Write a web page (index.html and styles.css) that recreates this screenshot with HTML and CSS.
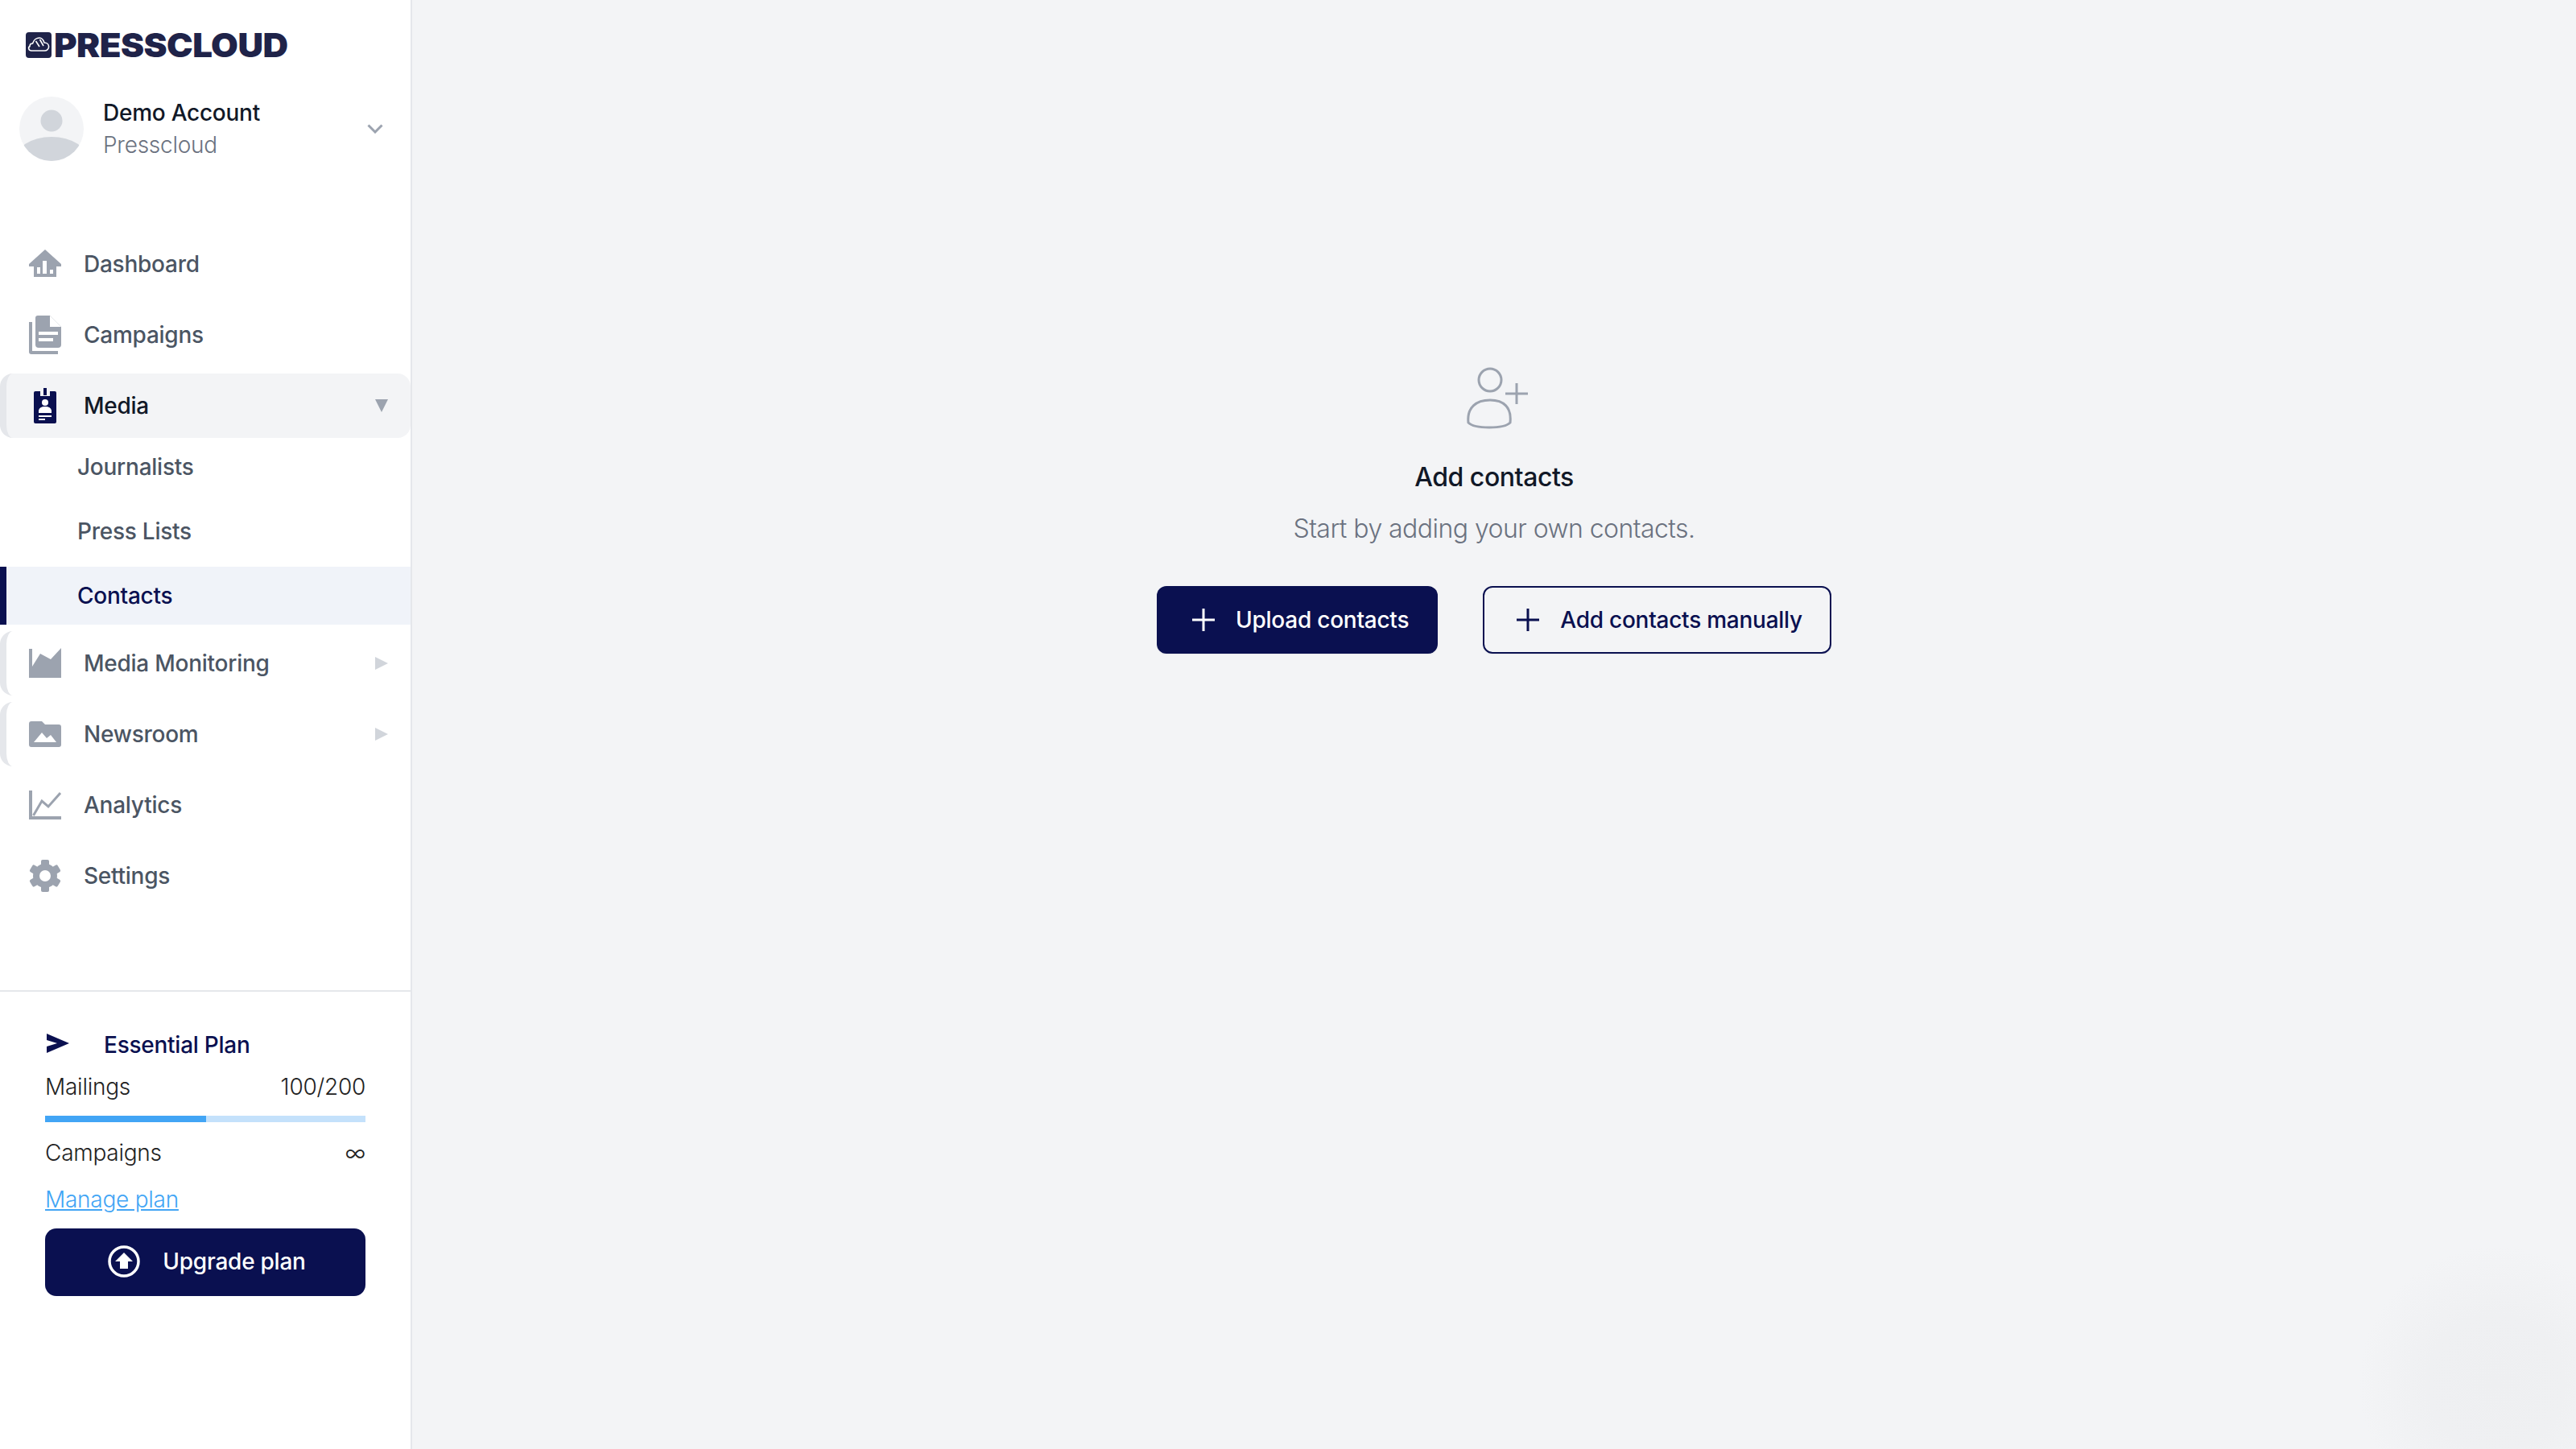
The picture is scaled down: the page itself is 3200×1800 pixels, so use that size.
FILE: index.html
```html
<!DOCTYPE html>
<html lang="en">
<head>
  <meta charset="UTF-8" />
  <meta name="viewport" content="width=device-width, initial-scale=1.0" />
  <title>Presscloud - Contacts</title>
  <link rel="stylesheet" href="styles.css">
</head>
<body>
  <aside class="sidebar">
    <div class="logo">
      <svg class="logo-mark" viewBox="0 0 32 32">
        <rect width="32" height="32" rx="4" fill="#1f2349"/>
        <path d="M7 23C3.5 23 2.6 19 5 17.5C5 15 7 14 8.5 14C10 9 14 7 17 7C20 7 22 10 23 13C26 13 28.6 15 28.6 18C28.6 21 26 23 23.5 23Z" fill="none" stroke="#fff" stroke-width="1.6"/>
        <path d="M12.5 11L17 18M17.5 9L22 17" fill="none" stroke="#fff" stroke-width="1.6"/>
      </svg>
      <span class="logo-text">PRESSCLOUD</span>
    </div>

    <div class="account">
      <svg class="avatar" viewBox="0 0 80 80">
        <clipPath id="avatar-clip"><circle cx="40" cy="40" r="40"/></clipPath>
        <circle cx="40" cy="40" r="40" fill="#f3f4f6"/>
        <circle cx="40" cy="30" r="13.5" fill="#d1d5db"/>
        <ellipse cx="40" cy="80" rx="46" ry="30" fill="#d1d5db" clip-path="url(#avatar-clip)"/>
      </svg>
      <div class="account-text">
        <div class="account-name">Demo Account</div>
        <div class="account-org">Presscloud</div>
      </div>
      <svg class="chevron" viewBox="0 0 20 12"><path d="M1.5 1.5L10 10L18.5 1.5" fill="none" stroke="#9ca3af" stroke-width="3"/></svg>
    </div>

    <nav class="nav">
      <a class="nav-item" href="#">
        <svg class="nav-icon" viewBox="0 0 40 40">
          <path d="M20 2L40 20V23H34V36H6V23H0V20Z" fill="#9ca3af"/>
          <path d="M10 24H14V32H10ZM17 16H22V32H17ZM26 27H30V32H26Z" fill="#fff"/>
        </svg>
        Dashboard
      </a>
      <a class="nav-item" href="#">
        <svg class="nav-icon tall" viewBox="0 0 40 48">
          <path d="M11 0H26L40 14V36Q40 40 36 40H12Q8 40 8 36V3Q8 0 11 0Z" fill="#9ca3af"/>
          <path d="M26 0V14H40Z" fill="#fff"/>
          <path d="M12 20H36V24H12ZM12 28H30V32H12Z" fill="#fff"/>
          <path d="M0 8H4V44H36V48H3Q0 48 0 45Z" fill="#9ca3af"/>
        </svg>
        Campaigns
      </a>
      <a class="nav-item open" href="#">
        <svg class="nav-icon tall" viewBox="0 0 40 48">
          <rect x="6" y="6" width="28" height="40" rx="2" fill="#0a1050"/>
          <rect x="14" y="6" width="12" height="6" fill="#f3f4f6"/>
          <rect x="18" y="2" width="4" height="9" fill="#0a1050"/>
          <circle cx="20" cy="20" r="4" fill="#fff"/>
          <path d="M12 33V30Q13 25 20 25Q27 25 28 30V33ZM12 36H28V38H12ZM12 40H20V42H12Z" fill="#fff"/>
        </svg>
        Media
        <span class="caret down"></span>
      </a>
      <div class="sub-nav">
        <a class="sub-item" href="#">Journalists</a>
        <a class="sub-item" href="#">Press Lists</a>
        <a class="sub-item active" href="#">Contacts</a>
      </div>
      <a class="nav-item closed" href="#">
        <svg class="nav-icon" viewBox="0 0 40 40">
          <path d="M0 2H4V24L14 8L27 15L40 1V38H0Z" fill="#9ca3af"/>
        </svg>
        Media Monitoring
        <span class="caret right"></span>
      </a>
      <a class="nav-item closed" href="#">
        <svg class="nav-icon" viewBox="0 0 40 40">
          <path d="M3 4H16L20 8H37Q40 8 40 11V33Q40 36 37 36H3Q0 36 0 33V7Q0 4 3 4Z" fill="#9ca3af"/>
          <path d="M6 30L16 18L22 25L27 21L34 30Z" fill="#fff"/>
        </svg>
        Newsroom
        <span class="caret right"></span>
      </a>
      <a class="nav-item" href="#">
        <svg class="nav-icon" viewBox="0 0 40 40">
          <path d="M0 2H4V34H40V38H0Z" fill="#9ca3af"/>
          <path d="M5.5 33L16 15L24 22L39 5" fill="none" stroke="#9ca3af" stroke-width="3"/>
        </svg>
        Analytics
      </a>
      <a class="nav-item" href="#">
        <svg class="nav-icon" viewBox="0 0 40 40">
          <g fill="#9ca3af">
            <circle cx="20" cy="20" r="15"/>
            <rect x="15" y="0" width="10" height="40" rx="2"/>
            <rect x="15" y="0" width="10" height="40" rx="2" transform="rotate(60 20 20)"/>
            <rect x="15" y="0" width="10" height="40" rx="2" transform="rotate(120 20 20)"/>
          </g>
          <circle cx="20" cy="20" r="7" fill="#fff"/>
        </svg>
        Settings
      </a>
    </nav>

    <section class="plan">
      <div class="plan-title">
        <svg class="plan-icon" viewBox="0 0 28 24"><path d="M0 0L28 12L0 24V16L13 12L0 8Z" fill="#0a1050"/></svg>
        <span>Essential Plan</span>
      </div>
      <div class="plan-row"><span>Mailings</span><span>100/200</span></div>
      <div class="bar"><div class="bar-fill" style="width: 50.25%"></div></div>
      <div class="plan-row second"><span>Campaigns</span><span>∞</span></div>
      <a class="manage" href="#">Manage plan</a>
      <a class="upgrade" href="#">
        <svg class="upgrade-icon" viewBox="0 0 40 40">
          <circle cx="20" cy="20" r="18" fill="none" stroke="#fff" stroke-width="3.5"/>
          <path d="M20 9L31 20H25V29H15V20H9Z" fill="#fff"/>
        </svg>
        Upgrade plan
      </a>
    </section>
  </aside>

  <main class="main">
    <svg class="empty-icon" viewBox="0 0 80 80">
      <circle cx="33" cy="16" r="14" fill="none" stroke="#9ca3af" stroke-width="3"/>
      <path d="M6 69C4 50 16 41 33 41C50 41 60 50 58 69C50 77 14 77 6 69Z" fill="none" stroke="#9ca3af" stroke-width="3"/>
      <path d="M66 20V46M52 33H80" fill="none" stroke="#9ca3af" stroke-width="3"/>
    </svg>
    <h1 class="empty-title">Add contacts</h1>
    <p class="empty-text">Start by adding your own contacts.</p>
    <div class="empty-actions">
      <a class="btn primary" href="#">
        <svg class="plus" viewBox="0 0 28 28"><path d="M14 0V28M0 14H28" fill="none" stroke="currentColor" stroke-width="3"/></svg>
        Upload contacts
      </a>
      <a class="btn outline" href="#">
        <svg class="plus" viewBox="0 0 28 28"><path d="M14 0V28M0 14H28" fill="none" stroke="currentColor" stroke-width="3"/></svg>
        Add contacts manually
      </a>
    </div>
    <div class="corner-glow"></div>
  </main>
</body>
</html>
```

FILE: styles.css
```css
* {
  box-sizing: border-box;
}
body {
  margin: 0;
  width: 3200px;
  height: 1800px;
  display: flex;
  overflow: hidden;
  font-family: Inter, 'Noto Sans', sans-serif;
  font-size: 28px;
  line-height: 40px;
  letter-spacing: -0.25px;
  background: #f3f4f6;
  color: #111827;
}
a {
  text-decoration: none;
  color: inherit;
}

/* sidebar */
.sidebar {
  width: 512px;
  height: 1800px;
  flex-shrink: 0;
  background: #fff;
  border-right: 2px solid #e5e7eb;
  padding-top: 40px;
}
.logo {
  display: flex;
  align-items: center;
  gap: 3px;
  height: 32px;
  padding-left: 32px;
}
.logo-mark {
  width: 32px;
  height: 32px;
  flex-shrink: 0;
}
.logo-text {
  font-weight: 900;
  font-size: 41px;
  line-height: 32px;
  letter-spacing: -0.5px;
  color: #1f2349;
  transform: scaleX(1.065);
  transform-origin: left center;
}
.account {
  display: flex;
  align-items: center;
  height: 80px;
  margin-top: 48px;
  padding-left: 24px;
}
.avatar {
  width: 80px;
  height: 80px;
  flex-shrink: 0;
}
.account-text {
  margin-left: 24px;
  flex: 1;
}
.account-name {
  font-weight: 500;
}
.account-org {
  font-weight: 300;
  color: #6b7280;
}
.chevron {
  width: 20px;
  height: 12px;
  margin-right: 34px;
}

/* nav */
.nav {
  display: flex;
  flex-direction: column;
  gap: 8px;
  margin-top: 88px;
}
.nav-item {
  display: flex;
  align-items: center;
  gap: 28px;
  height: 80px;
  padding-left: 36px;
  font-weight: 500;
  color: #4b5563;
  border-radius: 16px;
}
.nav-item.open,
.nav-item.closed {
  padding-left: 28px;
  border-left: 8px solid #e5e7eb;
}
.nav-item.open {
  background: #f3f4f6;
  color: #111827;
}
.nav-icon {
  width: 40px;
  height: 40px;
  flex-shrink: 0;
}
.nav-icon.tall {
  height: 48px;
}
.caret {
  width: 0;
  height: 0;
  margin-left: auto;
  margin-right: 28px;
}
.caret.down {
  border-left: 8px solid transparent;
  border-right: 8px solid transparent;
  border-top: 16px solid #9ca3af;
}
.caret.right {
  border-top: 8px solid transparent;
  border-bottom: 8px solid transparent;
  border-left: 16px solid #d1d5db;
}
.sub-nav {
  display: flex;
  flex-direction: column;
  gap: 8px;
  margin-top: -8px;
}
.sub-item {
  display: flex;
  align-items: center;
  height: 72px;
  padding-left: 96px;
  font-weight: 500;
  color: #4b5563;
}
.sub-item.active {
  padding-left: 88px;
  border-left: 8px solid #0a1050;
  background: #f0f3f9;
  color: #0a1050;
}

/* plan box */
.plan {
  margin-top: 102px;
  padding: 46px 56px 0;
  border-top: 2px solid #e5e7eb;
  font-weight: 300;
  color: #222;
}
.plan-title {
  display: flex;
  align-items: center;
  height: 40px;
  font-weight: 500;
  color: #0a1050;
}
.plan-icon {
  width: 28px;
  height: 24px;
  margin: -4px 43px 0 2px;
}
.plan-row {
  display: flex;
  justify-content: space-between;
  margin-top: 12px;
}
.plan-row.second {
  margin-top: 18px;
}
.bar {
  height: 8px;
  margin-top: 16px;
  background: #c4e1fb;
}
.bar-fill {
  height: 100%;
  background: #42a5f5;
}
.manage {
  display: block;
  margin-top: 18px;
  color: #42a5f5;
  text-decoration: underline;
}
.upgrade {
  display: flex;
  align-items: center;
  justify-content: center;
  gap: 28px;
  height: 84px;
  margin-top: 16px;
  padding: 0 0 2px 4px;
  border-radius: 14px;
  background: #0a1050;
  color: #fff;
  font-weight: 500;
}
.upgrade-icon {
  width: 40px;
  height: 40px;
}

/* empty state */
.main {
  position: relative;
  flex: 1;
  height: 1800px;
  overflow: hidden;
  display: flex;
  flex-direction: column;
  align-items: center;
  padding-top: 456px;
}
.empty-icon {
  width: 80px;
  height: 80px;
  margin-left: 4px;
}
.empty-title {
  margin: 37px 0 0;
  font-size: 32px;
  font-weight: 500;
  line-height: 40px;
  letter-spacing: -0.45px;
}
.empty-text {
  margin: 24px 0 0;
  font-size: 32px;
  font-weight: 300;
  line-height: 40px;
  letter-spacing: -0.55px;
  color: #6b7280;
}
.empty-actions {
  display: flex;
  gap: 56px;
  margin-top: 51px;
}
.btn {
  display: flex;
  align-items: center;
  gap: 26px;
  height: 84px;
  padding: 0 36px 0 44px;
  border-radius: 12px;
  font-weight: 500;
  box-shadow: 0 1px 2px rgba(0, 0, 0, 0.05);
}
.btn.primary {
  background: #0a1050;
  color: #fff;
}
.btn.outline {
  padding: 0 34px 0 40px;
  border: 2px solid #0a1050;
  color: #0a1050;
}
.plus {
  width: 28px;
  height: 28px;
}
.corner-glow {
  position: absolute;
  left: 2418px;
  top: 1548px;
  width: 340px;
  height: 340px;
  border-radius: 50%;
  background: radial-gradient(circle closest-side, #eeeff1 0%, #eff0f2 50%, #f3f4f6 100%);
}
```
